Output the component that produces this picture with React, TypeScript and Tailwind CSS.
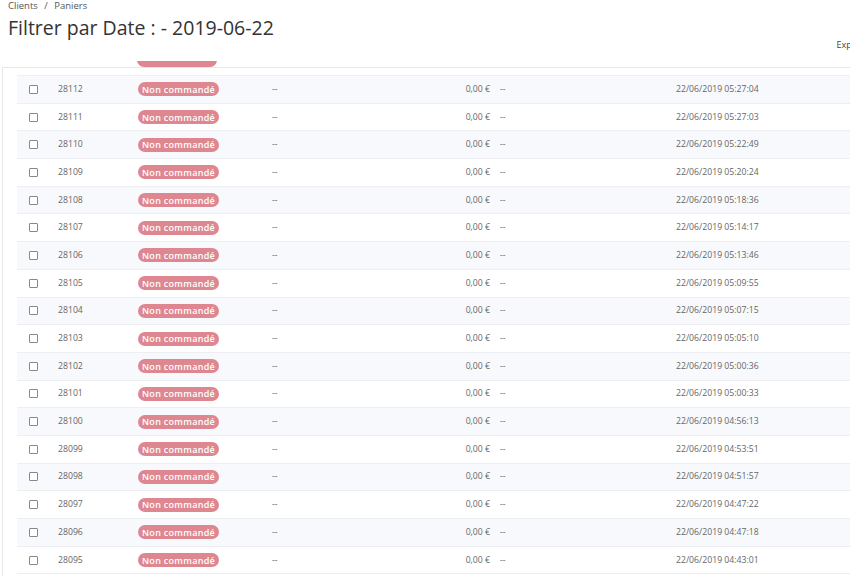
import React from 'react';

const times = [
  '05:27:04', '05:27:03', '05:22:49', '05:20:24', '05:18:36', '05:14:17',
  '05:13:46', '05:09:55', '05:07:15', '05:05:10', '05:00:36', '05:00:33',
  '04:56:13', '04:53:51', '04:51:57', '04:47:22', '04:47:18', '04:43:01',
];

const rows = times.map((t, i) => ({ id: 28112 - i, date: `22/06/2019 ${t}` }));

const Badge: React.FC = () => (
  <span className="inline-flex items-center h-[14px] px-[4px] rounded-full bg-[#de8790] text-white text-[9px] font-semibold tracking-[0.3px] leading-none">
    Non commandé
  </span>
);

const App: React.FC = () => {
  return (
    <div
      className="w-[850px] h-[576px] overflow-hidden bg-white text-[#666]"
      style={{ fontFamily: '"Open Sans", "Noto Sans", sans-serif' }}
    >
      {/* Header */}
      <div className="px-2">
        <div className="text-[9.5px] leading-[11px] text-[#555]">
          Clients <span className="mx-[4px]">/</span> Paniers
        </div>
        <h1 className="text-[19.5px] leading-[26px] mt-[4px] text-[#333]">Filtrer par Date : - 2019-06-22</h1>
        <div className="flex justify-end h-[14px] -mt-[3px]">
          <span className="text-[9px] text-[#444] mr-[-22px]">Export</span>
        </div>
      </div>

      <div className="h-[9px]" />

      {/* Partial row scrolled out */}
      <div className="h-[6px] overflow-hidden flex items-end pl-[137px]">
        <div className="h-[14px] w-[80px] rounded-full bg-[#de8790]" />
      </div>

      {/* Panel */}
      <div className="ml-[2px] border-t border-l border-[#e6e8ec] h-[520px]">
        <div className="h-[7px]" />
        <div className="ml-[14px] border-t border-[#eef0f3]">
          {rows.map((r, i) => (
            <div
              key={r.id}
              className={`flex items-center h-[27.7px] border-b border-[#eceef2] text-[8.7px] ${
                i % 2 === 0 ? 'bg-[#f8f9fc]' : 'bg-white'
              }`}
            >
              <div className="w-[41px] pl-[12px] flex items-center">
                <span className="w-[9px] h-[9px] border border-[#888] rounded-[1px] bg-white" />
              </div>
              <div className="w-[80px]">{r.id}</div>
              <div className="w-[134px] flex">
                <Badge />
              </div>
              <div className="w-[120px]">--</div>
              <div className="w-[98px] text-right">0,00 €</div>
              <div className="w-[186px] pl-[10px]">--</div>
              <div>{r.date}</div>
            </div>
          ))}
        </div>
      </div>
    </div>
  );
};

export default App;
